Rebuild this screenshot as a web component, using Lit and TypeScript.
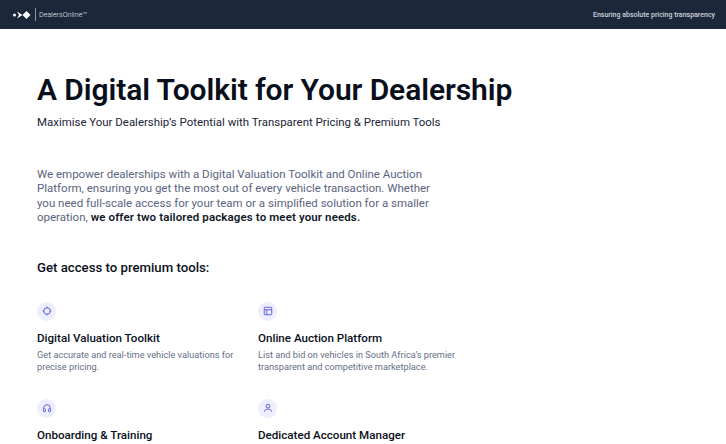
import { LitElement, html, css, svg } from "lit";
import { customElement } from "lit/decorators.js";

const icons = {
  target: svg`<circle cx="12" cy="12" r="8"/><path d="M12 1.500v4M12 18.500v4M1.500 12h4M18.500 12h4"/>`,
  layout: svg`<rect x="3" y="3" width="18" height="18" rx="2"/><path d="M3 9h18M9 9v12"/>`,
  head: svg`<path d="M4 15v-3a8 8 0 0 1 16 0v3"/><rect x="3.500" y="14" width="5" height="7" rx="1.500"/><rect x="15.500" y="14" width="5" height="7" rx="1.500"/>`,
  user: svg`<circle cx="12" cy="7.500" r="4.500"/><path d="M4 21v-1.500C4 16.500 6.500 15 9 15h6c2.500 0 5 1.500 5 4.500V21"/>`,
};

const items = [
  ["target", "Digital Valuation Toolkit", "Get accurate and real-time vehicle valuations for precise pricing."],
  ["layout", "Online Auction Platform", "List and bid on vehicles in South Africa’s premier transparent and competitive marketplace."],
  ["head", "Onboarding & Training", "Get started quickly with guided onboarding and training."],
  ["user", "Dedicated Account Manager", "Personal support whenever you need it."],
] as const;

@customElement("app-root")
export class AppRoot extends LitElement {
  static styles = css`
    :host { display: block; height: 444px; overflow: hidden; background: #fff; font-family: Roboto, "Liberation Sans", sans-serif; }
    header { height: 29px; background: #1c273a; color: #fff; display: flex; align-items: center; justify-content: space-between; padding: 0 11px 0 13px; box-sizing: border-box; }
    .logo { display: flex; align-items: center; gap: 3px; font-size: 7.2px; font-weight: 300; color: #e4e7ec; }
    .logo svg { margin-right: 1px; }
    .sep { width: 1px; height: 13px; background: #8d95a3; }
    .tag { font-size: 7px; font-weight: 500; color: #d0d5dd; }
    main { padding: 43px 37px 0; }
    h1 { margin: 0; font-size: 30px; line-height: 36px; font-weight: 600; color: #0a0f1c; letter-spacing: -0.08px; }
    .sub { margin: 4px 0 0; font-size: 11.45px; line-height: 20px; color: #1b2537; }
    .intro { margin: 35px 0 0; width: 410px; font-size: 11.5px; line-height: 14.4px; color: #5a6480; }
    .intro b { color: #111827; font-weight: 600; letter-spacing: 0.12px; }
    h2 { margin: 33px 0 0; font-size: 13.2px; font-weight: 500; line-height: 20px; color: #0a0f1c; }
    .grid { margin-top: 24px; display: grid; grid-template-columns: 201px 201px; column-gap: 20px; row-gap: 26px; }
    .badge { width: 19px; height: 19px; border-radius: 50%; background: #eeeefd; display: flex; align-items: center; justify-content: center; }
    .badge svg { width: 10px; height: 10px; fill: none; stroke: #5555e0; stroke-width: 2.2; }
    h3 { margin: 9px 0 0; font-size: 11.6px; line-height: 16px; font-weight: 500; color: #0a0f1c; }
    p.d { margin: 3px 0 0; font-size: 9.2px; line-height: 12px; color: #667085; }
  `;
  render() {
    return html`
      <header>
        <div class="logo">
          <svg width="18" height="10" viewBox="0 0 18 10" fill="#fff"><circle cx="1.500" cy="5" r="1.500"/><path d="M4 1.500 9.500 5 4 8.500 6 5zM9.500 5 13.500 1 17.500 5 13.500 9z"/></svg>
          <span class="sep"></span><span>DealersOnline™</span>
        </div>
        <div class="tag">Ensuring absolute pricing transparency</div>
      </header>
      <main>
        <h1>A Digital Toolkit for Your Dealership</h1>
        <p class="sub">Maximise Your Dealership’s Potential with Transparent Pricing & Premium Tools</p>
        <p class="intro">We empower dealerships with a Digital Valuation Toolkit and Online Auction Platform, ensuring you get the most out of every vehicle transaction. Whether you need full-scale access for your team or a simplified solution for a smaller operation, <b>we offer two tailored packages to meet your needs.</b></p>
        <h2>Get access to premium tools:</h2>
        <div class="grid">
          ${items.map(([i, t, d]) => html`<div>
            <div class="badge"><svg viewBox="0 0 24 24">${icons[i]}</svg></div>
            <h3>${t}</h3><p class="d">${d}</p></div>`)}
        </div>
      </main>`;
  }
}
